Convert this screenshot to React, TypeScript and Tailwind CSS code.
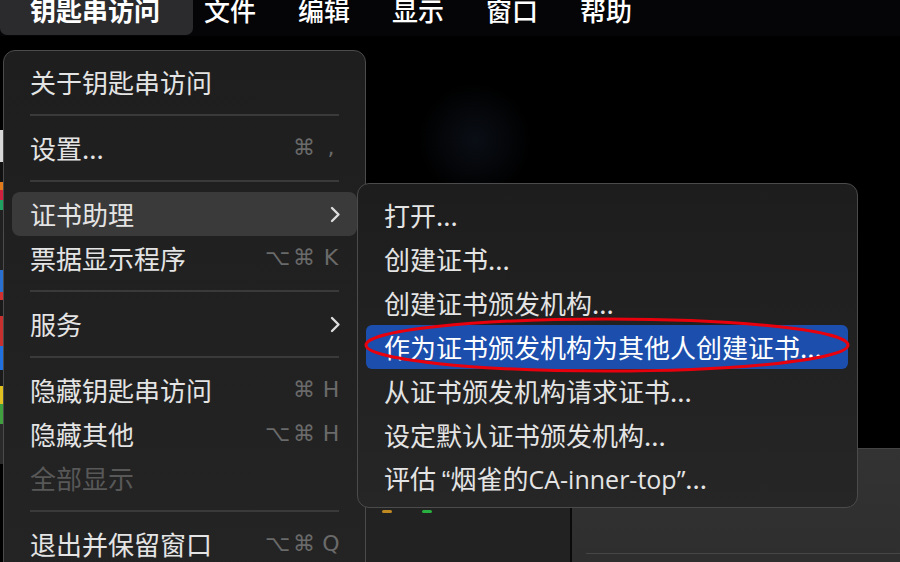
import React from "react";

type Item =
  | { kind: "sep" }
  | {
      kind: "item";
      label: string;
      keys?: string[];
      sub?: boolean;
      active?: boolean;
      disabled?: boolean;
    };

const mainItems: Item[] = [
  { kind: "item", label: "关于钥匙串访问" },
  { kind: "sep" },
  { kind: "item", label: "设置...", keys: ["⌘", ","] },
  { kind: "sep" },
  { kind: "item", label: "证书助理", sub: true, active: true },
  { kind: "item", label: "票据显示程序", keys: ["⌥", "⌘", "K"] },
  { kind: "sep" },
  { kind: "item", label: "服务", sub: true },
  { kind: "sep" },
  { kind: "item", label: "隐藏钥匙串访问", keys: ["⌘", "H"] },
  { kind: "item", label: "隐藏其他", keys: ["⌥", "⌘", "H"] },
  { kind: "item", label: "全部显示", disabled: true },
  { kind: "sep" },
  { kind: "item", label: "退出并保留窗口", keys: ["⌥", "⌘", "Q"] },
];

const subItems: React.ReactNode[] = [
  "打开...",
  "创建证书...",
  "创建证书颁发机构...",
  "作为证书颁发机构为其他人创建证书...",
  "从证书颁发机构请求证书...",
  "设定默认证书颁发机构...",
  <>
    评估 <span className="font-['Liberation_Sans',sans-serif]">“</span>烟雀的
    <span className="font-['Open_Sans',sans-serif] text-[25px]">CA-inner-top”</span>...
  </>,
];

function Chevron() {
  return (
    <svg width="11" height="17" viewBox="0 0 11 17" className="shrink-0">
      <polyline
        points="2,2 8.5,8.5 2,15"
        fill="none"
        stroke="#dcdcdc"
        strokeWidth="2.4"
        strokeLinecap="round"
        strokeLinejoin="round"
      />
    </svg>
  );
}

function Keys({ keys }: { keys: string[] }) {
  return (
    <div className="flex items-center gap-[8px] text-[#6a6a6a] text-[22px] leading-none font-['DejaVu_Sans',sans-serif]">
      {keys.map((k, i) => (
        <span key={i} className="w-[20px] text-center">
          {k}
        </span>
      ))}
    </div>
  );
}

function MainMenu() {
  return (
    <div className="absolute left-[3px] top-[50px] w-[363px] h-[540px] rounded-[12px] border border-[#4b4b4b] bg-gradient-to-b from-[#1e1e1e] to-[#242424] px-[8px] pt-[9px]">
      {mainItems.map((it, i) =>
        it.kind === "sep" ? (
          <div key={i} className="h-[22px] flex items-center px-[18px]">
            <div className="h-[2px] w-full bg-[#3a3a3a]" />
          </div>
        ) : (
          <div
            key={i}
            className={
              "h-[44px] flex items-center justify-between pl-[18px] pr-[16px] rounded-[8px] " +
              (it.active ? "bg-[#3a3a3b]" : "")
            }
          >
            <span
              className={
                "text-[26px] leading-none " +
                (it.disabled ? "text-[#585858]" : "text-[#e4e4e4]")
              }
            >
              {it.label}
            </span>
            {it.sub && <Chevron />}
            {it.keys && <Keys keys={it.keys} />}
          </div>
        )
      )}
    </div>
  );
}

function SubMenu() {
  return (
    <div className="absolute left-[357px] top-[183px] w-[501px] h-[325px] rounded-[12px] border border-[#4b4b4b] bg-gradient-to-b from-[#1d1d1d] to-[#262626] pl-[8px] pr-[9px] pt-[9px]">
      {subItems.map((label, i) => (
        <div
          key={i}
          className={
            "h-[44px] flex items-center pl-[18px] rounded-[6px] " +
            (i === 3 ? "bg-[#1b4ead] text-white" : "text-[#e4e4e4]")
          }
        >
          <span className="text-[26px] leading-none whitespace-nowrap">{label}</span>
        </div>
      ))}
    </div>
  );
}

export default function App() {
  return (
    <div className="relative w-[900px] h-[562px] overflow-hidden bg-black font-['Noto_Sans_CJK_SC',sans-serif]">
      {/* menu bar */}
      <div className="h-[36px] bg-[#050507] flex items-start text-white text-[26px] leading-none">
        <div className="w-[193px] h-[35px] rounded-b-[7px] bg-[#2b2b2d] pl-[30px] font-bold">
          <div className="-mt-[3px]">钥匙串访问</div>
        </div>
        <div className="flex gap-[42px] ml-[11px] -mt-[3px] font-medium">
          <span>文件</span>
          <span>编辑</span>
          <span>显示</span>
          <span>窗口</span>
          <span>帮助</span>
        </div>
      </div>

      {/* faint desktop glow */}
      <div className="absolute left-[420px] top-[80px] w-[110px] h-[120px] rounded-full bg-[radial-gradient(circle,#0a0e15_0%,transparent_70%)]" />

      {/* left edge strip (dock) */}
      <div className="absolute left-0 top-[130px] w-[3px] flex flex-col">
        <div className="h-[32px] bg-[#d8d8d8]" />
        <div className="h-[20px] bg-[#111]" />
        <div className="h-[8px] bg-[#e07a1a]" />
        <div className="h-[10px] bg-[#d02040]" />
        <div className="h-[10px] bg-[#20a060]" />
        <div className="h-[60px] bg-[#202020]" />
        <div className="h-[22px] bg-[#2a70d0]" />
        <div className="h-[8px] bg-[#d03030]" />
        <div className="h-[16px] bg-[#1a1a1a]" />
        <div className="h-[30px] bg-[#c83030]" />
        <div className="h-[24px] bg-[#2070e0]" />
        <div className="h-[16px] bg-[#1a1a1a]" />
        <div className="h-[18px] bg-[#e0c020]" />
        <div className="h-[20px] bg-[#40a040]" />
        <div className="h-[40px] bg-[#2a2a2a]" />
      </div>

      {/* window behind */}
      <div className="absolute left-[365px] top-[448px] right-0 bottom-0 flex">
        <div className="w-[205px] bg-[#222222] border-l border-[#3a3a3a] relative">
          <div className="absolute left-[16px] top-[62px] w-[10px] h-[3px] rounded-full bg-[#c08a20]" />
          <div className="absolute left-[56px] top-[62px] w-[10px] h-[3px] rounded-full bg-[#28b040]" />
        </div>
        <div className="w-[2px] bg-[#0a0a0a]" />
        <div className="flex-1 bg-gradient-to-b from-[#333333] to-[#2e2e2e] border-t border-[#444] pt-[104px] pl-[14px]">
          <div className="h-px bg-[#464646]" />
        </div>
      </div>

      <MainMenu />
      <SubMenu />

      {/* red annotation ellipse */}
      <svg className="absolute left-0 top-0 pointer-events-none" width="900" height="562">
        <ellipse cx="607" cy="345" rx="241" ry="26" fill="none" stroke="#e8000c" strokeWidth="3" />
      </svg>
    </div>
  );
}
